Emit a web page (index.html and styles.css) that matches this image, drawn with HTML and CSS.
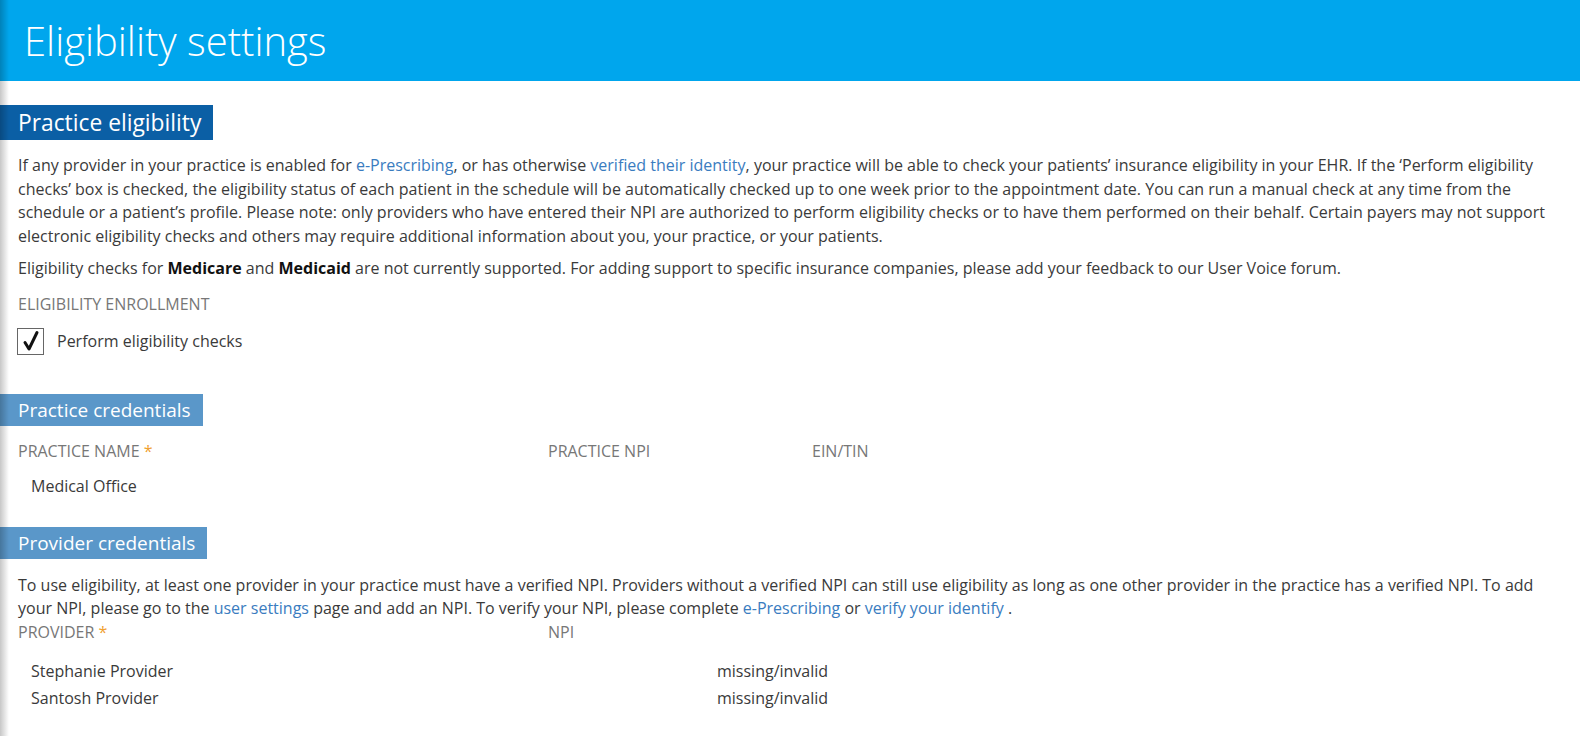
FILE: index.html
```html
<!DOCTYPE html>
<html lang="en">
<head>
  <meta charset="UTF-8" />
  <meta name="viewport" content="width=device-width, initial-scale=1.0" />
  <title>Eligibility settings</title>
  <link rel="stylesheet" href="styles.css">
</head>
<body>
  <div class="page">
    <header class="topbar">
      <h1>Eligibility settings</h1>
    </header>

    <section class="section eligibility">
      <h2 class="section-title dark">Practice eligibility</h2>
      <p class="text">If any provider in your practice is enabled for <a href="#">e-Prescribing</a>, or has otherwise <a href="#">verified their identity</a>, your practice will be able to check your patients’ insurance eligibility in your EHR. If the ‘Perform eligibility checks’ box is checked, the eligibility status of each patient in the schedule will be automatically checked up to one week prior to the appointment date. You can run a manual check at any time from the schedule or a patient’s profile. Please note: only providers who have entered their NPI are authorized to perform eligibility checks or to have them performed on their behalf. Certain payers may not support electronic eligibility checks and others may require additional information about you, your practice, or your patients.</p>
      <p class="text second">Eligibility checks for <b>Medicare</b> and <b>Medicaid</b> are not currently supported. For adding support to specific insurance companies, please add your feedback to our User Voice forum.</p>
      <div class="label enroll">Eligibility enrollment</div>
      <label class="check">
        <span class="box">
          <svg width="22" height="22" viewBox="0 0 22 22"><path d="M5 12.5 L9 19 L17 2.5" fill="none" stroke="#111" stroke-width="3" stroke-linejoin="round" stroke-linecap="round"/></svg>
        </span>
        Perform eligibility checks
      </label>
    </section>

    <section class="section practice-creds">
      <h2 class="section-title light">Practice credentials</h2>
      <div class="grid practice">
        <div class="label">Practice name <span class="req">*</span></div>
        <div class="label">Practice NPI</div>
        <div class="label">EIN/TIN</div>
        <div class="value">Medical Office</div>
        <div></div>
        <div></div>
      </div>
    </section>

    <section class="section provider-creds">
      <h2 class="section-title light">Provider credentials</h2>
      <p class="text tight">To use eligibility, at least one provider in your practice must have a verified NPI. Providers without a verified NPI can still use eligibility as long as one other provider in the practice has a verified NPI. To add your NPI, please go to the <a href="#">user settings</a> page and add an NPI. To verify your NPI, please complete <a href="#">e-Prescribing</a> or <a href="#">verify your identify</a> .</p>
      <div class="provider-head">
        <div class="label">Provider <span class="req">*</span></div>
        <div class="label">NPI</div>
      </div>
      <div class="provider-rows">
        <div class="row"><span class="value">Stephanie Provider</span><span class="value">missing/invalid</span></div>
        <div class="row"><span class="value">Santosh Provider</span><span class="value">missing/invalid</span></div>
      </div>
    </section>
  </div>
</body>
</html>
```

FILE: styles.css
```css
html, body {
  margin: 0;
  padding: 0;
}
body {
  font-family: "Open Sans", "Liberation Sans", sans-serif;
  font-size: 16px;
  color: #3a3a3a;
  background: #fff;
}
.page {
  min-height: 736px;
  position: relative;
}
/* soft shadow down the left edge */
.page::after {
  content: "";
  position: absolute;
  top: 0;
  bottom: 0;
  left: 0;
  width: 9px;
  background: linear-gradient(to right, rgba(0,0,0,0.22), rgba(0,0,0,0));
  pointer-events: none;
}
.topbar {
  background: #00a6ed;
  height: 81px;
  display: flex;
  align-items: center;
  padding-left: 24px;
}
.topbar h1 {
  margin: 0;
  color: #fff;
  font-weight: 300;
  font-size: 40px;
}
.section.eligibility {
  padding-top: 24px;
}
.section.practice-creds {
  padding-top: 39px;
}
.section.provider-creds {
  padding-top: 30px;
}
.section-title {
  display: inline-block;
  vertical-align: top;
  margin: 0;
  color: #fff;
  font-weight: 400;
  font-size: 22.8px;
  padding: 0 12px 0 18px;
}
.section-title.dark {
  background: #0b5fa5;
  height: 35px;
  line-height: 35px;
}
.section-title.light {
  background: #5a97c9;
  font-size: 19px;
  height: 32px;
  line-height: 32px;
}
.text {
  margin: 14px 18px 0 18px;
  line-height: 23.5px;
}
.text.second {
  margin-top: 9px;
}
.text.tight {
  margin-top: 15px;
}
a {
  color: #3a7cc0;
  text-decoration: none;
}
b {
  color: #111;
}
.label {
  text-transform: uppercase;
  color: #777;
  font-size: 16px;
  line-height: 22px;
}
.req {
  color: #f0a030;
}
.enroll {
  margin: 12px 18px 0 18px;
}
.check {
  display: flex;
  align-items: center;
  gap: 13px;
  margin: 13px 18px 0 17px;
}
.box {
  width: 25px;
  height: 25px;
  border: 1px solid #666;
  display: flex;
  align-items: center;
  justify-content: center;
}
.grid {
  display: grid;
  grid-template-columns: 530px 264px 1fr;
  margin: 14px 18px 0 18px;
}
.value {
  line-height: 22px;
}
.practice .value {
  padding: 13px 0 0 13px;
}
.provider-head {
  display: grid;
  grid-template-columns: 530px 1fr;
  margin: 0 18px 0 18px;
}
.provider-rows {
  margin: 15px 18px 0 31px;
}
.row {
  display: grid;
  grid-template-columns: 686px 1fr;
  height: 27px;
  align-items: center;
}
```
